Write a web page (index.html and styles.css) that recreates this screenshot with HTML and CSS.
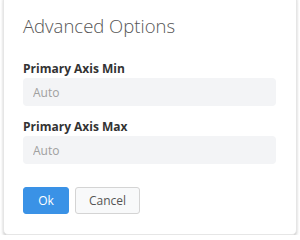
FILE: index.html
```html
<!DOCTYPE html>
<html lang="en">
<head>
    <meta charset="UTF-8">
    <meta name="viewport" content="width=device-width, initial-scale=1.0">
    <title>Advanced Options</title>
    <link rel="stylesheet" href="styles.css">
</head>
<body>
    <div class="dialog">
        <h1>Advanced Options</h1>
        <div class="form-group">
            <label for="axisMin">Primary Axis Min</label>
            <input type="text" id="axisMin" placeholder="Auto">
        </div>
        <div class="form-group">
            <label for="axisMax">Primary Axis Max</label>
            <input type="text" id="axisMax" placeholder="Auto">
        </div>
        <div class="actions">
            <button class="btn btn-primary">Ok</button>
            <button class="btn btn-default">Cancel</button>
        </div>
    </div>
</body>
</html>
```

FILE: styles.css
```css
body {
    font-family: "Open Sans", sans-serif;
    background: #fff;
    margin: 0;
    padding: 0;
}

.dialog {
    background: #fff;
    margin: -6px 3px 0 3px;
    height: 241px;
    box-sizing: border-box;
    padding: 18px 20px 0 19px;
    border: 1px solid #e6e6e6;
    border-radius: 5px;
    box-shadow: 0 2px 3px rgba(0, 0, 0, 0.2);
}

h1 {
    font-size: 18.5px;
    font-weight: 300;
    color: #555;
    margin: 0 0 22px 0;
    line-height: 25px;
}

.form-group {
    margin-bottom: 12px;
}

label {
    display: block;
    font-size: 12px;
    font-weight: 700;
    color: #333;
    margin-bottom: 1px;
    line-height: 17px;
}

input {
    display: block;
    width: 100%;
    box-sizing: border-box;
    height: 28px;
    padding: 0 10px;
    border: none;
    border-radius: 4px;
    background: #f3f4f6;
    font-family: "Open Sans", sans-serif;
    font-size: 12px;
    color: #333;
}

input::placeholder {
    color: #a0a0a0;
}

.actions {
    display: flex;
    gap: 6px;
    margin-top: 23px;
}

.btn {
    height: 27px;
    border-radius: 3px;
    font-family: "Open Sans", sans-serif;
    font-size: 12px;
    cursor: pointer;
}

.btn-primary {
    width: 46px;
    background: #3a92e6;
    border: 1px solid #3a92e6;
    color: #fff;
}

.btn-default {
    width: 65px;
    background: #f8f9fa;
    border: 1px solid #d4d4d4;
    color: #555;
}
```
